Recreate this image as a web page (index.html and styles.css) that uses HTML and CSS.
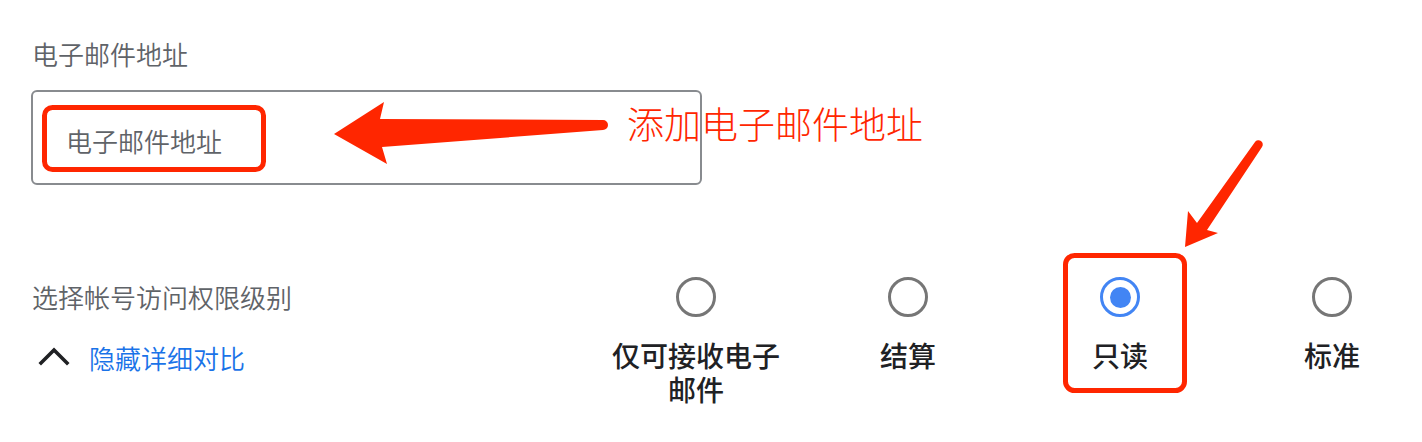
FILE: index.html
```html
<!DOCTYPE html>
<html lang="zh-CN">
<head>
<meta charset="utf-8">
<link rel="stylesheet" href="styles.css">
</head>
<body>
<div class="page">
  <section class="field">
    <div class="field-label">电子邮件地址</div>
    <div class="input-box"><span class="placeholder">电子邮件地址</span></div>
  </section>

  <section class="access">
    <div class="access-left">
      <div class="access-title">选择帐号访问权限级别</div>
      <div class="toggle">
        <svg class="chevron" width="32" height="20" viewBox="0 0 32 20"><path d="M3 17 L16 4 L29 17" fill="none" stroke="#202124" stroke-width="3.6" stroke-linecap="square" stroke-linejoin="miter"/></svg>
        <span class="toggle-text">隐藏详细对比</span>
      </div>
    </div>
    <div class="options">
      <div class="option"><span class="radio"></span><span class="option-label">仅可接收电子邮件</span></div>
      <div class="option"><span class="radio"></span><span class="option-label">结算</span></div>
      <div class="option"><span class="radio checked"></span><span class="option-label">只读</span></div>
      <div class="option"><span class="radio"></span><span class="option-label">标准</span></div>
    </div>
  </section>

  <div class="annot-text">添加电子邮件地址</div>
  <svg class="annot" width="1422" height="442" viewBox="0 0 1422 442">
    <rect x="44.5" y="107.5" width="219" height="62" rx="8" fill="none" stroke="#ff2600" stroke-width="5"/>
    <rect x="1065.5" y="255.5" width="119" height="135" rx="9" fill="none" stroke="#ff2600" stroke-width="5"/>
    <path d="M334 134 L384 102 L380 119 L603 120 A5 5 0 0 1 603 130 L382 147 L387 164 Z" fill="#ff2600"/>
    <path d="M1185 247 L1188 211 L1197 223 L1255 142 A4 4 0 0 1 1262 147 L1207 230 L1218 233 Z" fill="#ff2600"/>
  </svg>
</div>
</body>
</html>
```

FILE: styles.css
```css
html, body {
  margin: 0;
  padding: 0;
  background: #ffffff;
}
body {
  width: 1422px;
  height: 442px;
  overflow: hidden;
  font-family: "Noto Sans CJK SC", "Noto Sans", sans-serif;
}
.page {
  position: relative;
  width: 1422px;
  height: 442px;
  padding: 36px 0 0 31px;
  box-sizing: border-box;
}
.field {
  display: flex;
  flex-direction: column;
}
.field-label {
  font-size: 26px;
  line-height: 36px;
  color: #5f6368;
  padding-left: 1px;
  font-weight: 350;
}
.input-box {
  margin-top: 18px;
  width: 671px;
  height: 95px;
  box-sizing: border-box;
  border: 2px solid #888b8f;
  border-radius: 6px;
  display: flex;
  align-items: center;
  padding-left: 33px;
  padding-top: 6px;
}
.placeholder {
  font-size: 26px;
  line-height: 36px;
  color: #5f6368;
  font-weight: 350;
}
.access {
  margin-top: 92px;
  display: flex;
}
.access-left {
  width: 575px;
  display: flex;
  flex-direction: column;
}
.access-title {
  margin-top: 2px;
  font-size: 26px;
  line-height: 36px;
  color: #5f6368;
  padding-left: 1px;
  font-weight: 350;
}
.toggle {
  margin-top: 25px;
  display: flex;
  align-items: center;
  gap: 19px;
}
.chevron {
  margin-left: 7px;
  margin-top: -4px;
}
.toggle-text {
  font-size: 26px;
  line-height: 36px;
  color: #1a73e8;
  font-weight: 350;
}
.options {
  display: flex;
  gap: 32px;
}
.option {
  width: 180px;
  display: flex;
  flex-direction: column;
  align-items: center;
}
.radio {
  width: 40px;
  height: 40px;
  box-sizing: border-box;
  border: 3.5px solid #767676;
  border-radius: 50%;
  display: flex;
  align-items: center;
  justify-content: center;
}
.radio.checked {
  border-color: #4285f4;
}
.radio.checked::after {
  content: "";
  width: 21px;
  height: 21px;
  border-radius: 50%;
  background: #4285f4;
}
.option-label {
  margin-top: 21px;
  font-size: 28px;
  line-height: 34px;
  font-weight: 500;
  color: #202124;
  text-align: center;
  width: 172px;
}
.annot {
  position: absolute;
  left: 0;
  top: 0;
  pointer-events: none;
}
.annot-text {
  position: absolute;
  left: 627px;
  top: 98px;
  font-size: 37px;
  line-height: 50px;
  font-weight: 300;
  color: #ff2600;
  white-space: nowrap;
}
```
